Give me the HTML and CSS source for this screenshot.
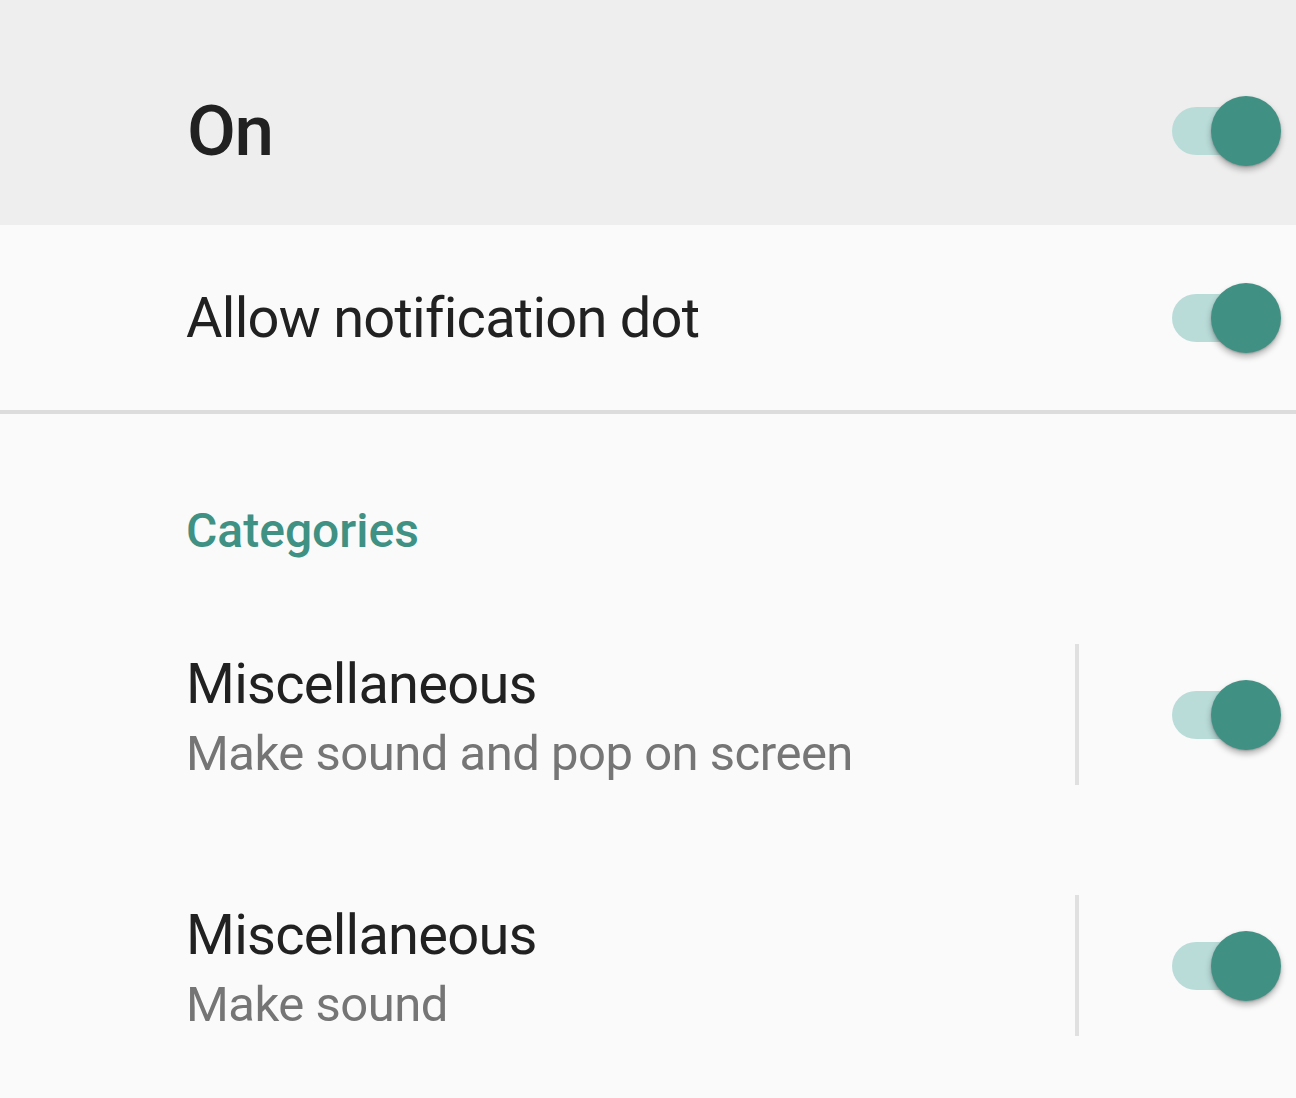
FILE: index.html
```html
<!DOCTYPE html>
<html lang="en">
<head>
<meta charset="utf-8">
<title>Notifications</title>
<link rel="stylesheet" href="styles.css">
</head>
<body>
<div class="screen">
  <div class="switchbar">
    <div class="switchbar-label">On</div>
    <div class="toggle"><span class="track"></span><span class="thumb"></span></div>
  </div>

  <div class="row-simple">
    <div class="row-title">Allow notification dot</div>
    <div class="toggle"><span class="track"></span><span class="thumb"></span></div>
  </div>

  <div class="divider"></div>

  <div class="category-header">Categories</div>

  <div class="row-cat">
    <div class="texts">
      <div class="row-title">Miscellaneous</div>
      <div class="row-summary">Make sound and pop on screen</div>
    </div>
    <div class="vsep"></div>
    <div class="toggle"><span class="track"></span><span class="thumb"></span></div>
  </div>

  <div class="row-cat">
    <div class="texts">
      <div class="row-title">Miscellaneous</div>
      <div class="row-summary">Make sound</div>
    </div>
    <div class="vsep"></div>
    <div class="toggle"><span class="track"></span><span class="thumb"></span></div>
  </div>
</div>
</body>
</html>
```

FILE: styles.css
```css
html, body {
  margin: 0;
  padding: 0;
  background: #fafafa;
}

body {
  font-family: Roboto, "Noto Sans", "Liberation Sans", sans-serif;
  color: #212121;
  width: 1296px;
  height: 1098px;
  overflow: hidden;
}

.screen {
  display: flex;
  flex-direction: column;
}

.switchbar {
  box-sizing: border-box;
  height: 225px;
  padding: 36px 15px 0 187px;
  background: #eeeeee;
  display: flex;
  align-items: center;
  justify-content: space-between;
}

.switchbar-label {
  font-size: 71px;
  font-weight: 500;
  line-height: 1;
  letter-spacing: -1.5px;
  color: #212121;
}

.row-simple {
  box-sizing: border-box;
  height: 185px;
  padding: 0 15px 0 186px;
  display: flex;
  align-items: center;
  justify-content: space-between;
}

.row-title {
  font-size: 56px;
  line-height: 70px;
  letter-spacing: -0.75px;
  color: #212121;
}

.divider {
  height: 4px;
  background: #dcdcdc;
}

.category-header {
  padding: 93px 0 34px 186px;
  font-size: 48px;
  font-weight: 500;
  line-height: 48px;
  color: #3f9184;
}

.row-cat {
  box-sizing: border-box;
  height: 251px;
  padding: 0 15px 0 186px;
  display: flex;
  align-items: center;
}

.texts {
  flex: 1;
  padding-top: 8px;
}

.row-summary {
  font-size: 49px;
  line-height: 69px;
  letter-spacing: -0.5px;
  color: #757575;
}

.vsep {
  width: 4px;
  height: 141px;
  background: #e0e0e0;
  margin-right: 93px;
}

.toggle {
  position: relative;
  width: 109px;
  height: 70px;
  flex: none;
}

.track {
  position: absolute;
  left: 0;
  top: 11px;
  width: 96px;
  height: 48px;
  border-radius: 24px;
  background: #b9dcd9;
}

.thumb {
  position: absolute;
  right: 0;
  top: 0;
  width: 70px;
  height: 70px;
  border-radius: 50%;
  background: #409184;
  box-shadow: 0 4px 6px rgba(0, 0, 0, 0.28), 0 1px 2px rgba(0, 0, 0, 0.18);
}
```
